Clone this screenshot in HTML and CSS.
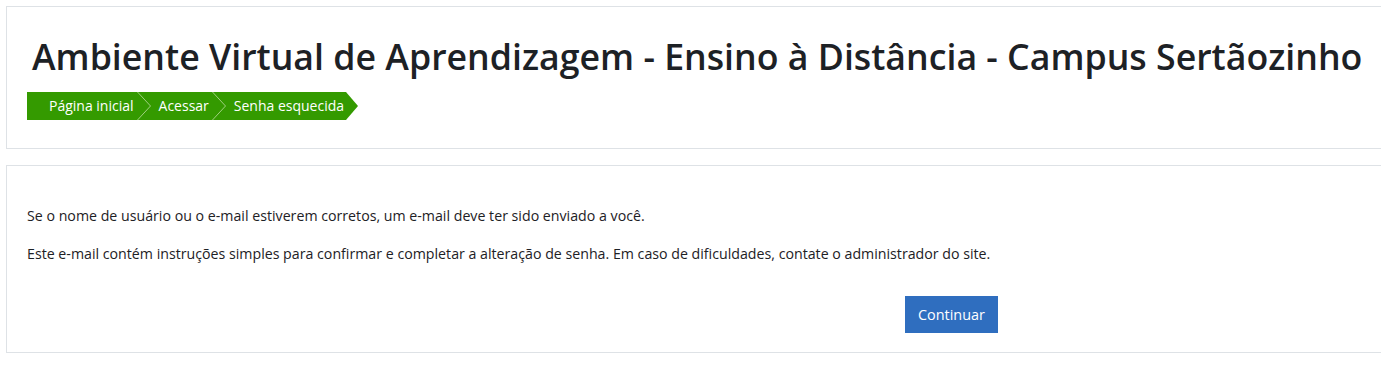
FILE: index.html
```html
<!DOCTYPE html>
<html lang="pt-br">
<head>
    <meta charset="UTF-8">
    <meta name="viewport" content="width=device-width, initial-scale=1.0">
    <title>Senha esquecida</title>
    <link rel="stylesheet" href="styles.css">
</head>
<body>
    <div class="page">
        <header class="card page-header">
            <h1 class="site-title">Ambiente Virtual de Aprendizagem - Ensino à Distância - Campus Sertãozinho</h1>
            <nav class="breadcrumb">
                <div class="crumbs">
                    <a href="#" class="crumb">Página inicial</a>
                    <svg class="sep" width="14" height="28" viewBox="0 0 14 28"><path d="M0.5 0 L13.5 14 L0.5 28" fill="none" stroke="#9fd07f" stroke-width="1"/></svg>
                    <a href="#" class="crumb">Acessar</a>
                    <svg class="sep" width="14" height="28" viewBox="0 0 14 28"><path d="M0.5 0 L13.5 14 L0.5 28" fill="none" stroke="#9fd07f" stroke-width="1"/></svg>
                    <span class="crumb">Senha esquecida</span>
                </div>
                <span class="tip"></span>
            </nav>
        </header>

        <main class="card content">
            <p>Se o nome de usuário ou o e-mail estiverem corretos, um e-mail deve ter sido enviado a você.</p>
            <p>Este e-mail contém instruções simples para confirmar e completar a alteração de senha. Em caso de dificuldades, contate o administrador do site.</p>
            <div class="actions">
                <button type="button" class="btn-primary">Continuar</button>
            </div>
        </main>
    </div>
</body>
</html>
```

FILE: styles.css
```css
* {
    margin: 0;
    padding: 0;
    box-sizing: border-box;
}

html, body {
    overflow: hidden;
}

body {
    font-family: 'Open Sans', 'Noto Sans', sans-serif;
    font-size: 14.2px;
    line-height: 1.5;
    color: #1d2125;
    background: #fff;
    padding: 6px;
}

.page {
    width: 1420px;
    display: flex;
    flex-direction: column;
    gap: 16px;
}

.card {
    border: 1px solid #dee2e6;
    background: #fff;
}

.page-header {
    padding: 28px 20px 28px 20px;
}

.site-title {
    font-size: 35.7px;
    font-weight: 600;
    line-height: 1.2;
    margin-left: 5px;
    margin-bottom: 14px;
    white-space: nowrap;
}

.breadcrumb {
    display: flex;
    align-items: center;
}

.crumbs {
    display: flex;
    align-items: center;
    height: 28px;
    background: #349a00;
    padding-left: 22px;
    padding-right: 2px;
}

.crumb {
    color: #fff;
    text-decoration: none;
    font-size: 14px;
    line-height: 28px;
}

.sep {
    display: block;
    margin: 0 8px 0 3px;
}

.tip {
    width: 0;
    height: 0;
    border-top: 14px solid transparent;
    border-bottom: 14px solid transparent;
    border-left: 12px solid #349a00;
}

.content {
    padding: 39px 20px 19px 20px;
}

.content p {
    line-height: 22px;
    margin-bottom: 16.5px;
}

.actions {
    padding-left: 878px;
    padding-top: 14px;
}

.btn-primary {
    font-family: inherit;
    font-size: 14.4px;
    line-height: 1.5;
    color: #fff;
    background: #2f6ebf;
    border: 1px solid #2f6ebf;
    padding: 7px 12px;
    cursor: pointer;
}
```
